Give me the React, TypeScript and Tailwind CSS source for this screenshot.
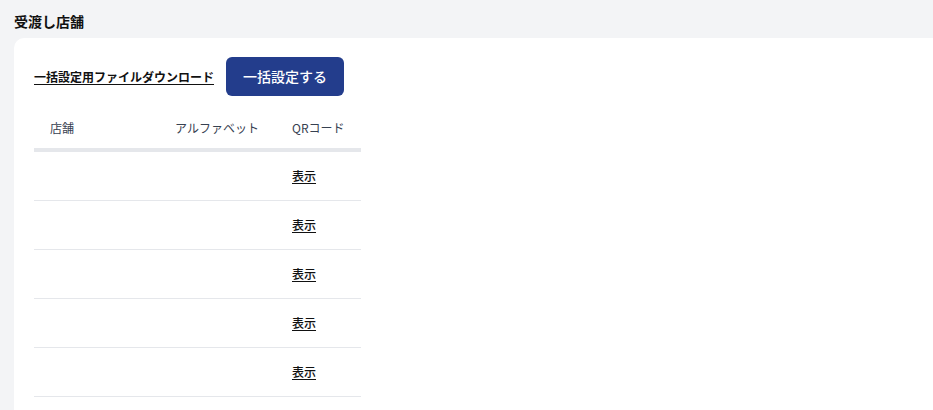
import React from "react";

const font = { fontFamily: '"Noto Sans CJK JP", "Noto Sans", sans-serif' };

export default function App() {
  const rows = [0, 1, 2, 3, 4];
  return (
    <div
      className="h-[410px] w-[933px] overflow-hidden bg-[#f3f4f6] pl-[14px] pt-[11px] flex flex-col text-black"
      style={font}
    >
      <h1 className="text-[14px] leading-5 font-bold text-[#111111]">受渡し店舗</h1>
      <div className="mt-[7px] flex-1 bg-white rounded-tl-[10px] pl-5 pt-[19px]">
        <div className="flex items-center gap-3">
          <a href="#" className="text-[12px] font-bold underline underline-offset-2 text-[#111111]">
            一括設定用ファイルダウンロード
          </a>
          <button className="w-[118px] h-[39px] rounded-md bg-[#233d8c] text-white text-[14px] font-medium">
            一括設定する
          </button>
        </div>
        <div className="mt-3 w-[327px]">
          <div className="grid grid-cols-[125px_104px_98px] h-10 items-center text-[12px] text-[#374151] border-b-4 border-[#e5e7eb] box-content">
            <div className="pl-4">店舗</div>
            <div className="pl-4 whitespace-nowrap">アルファベット</div>
            <div className="pl-[29px] whitespace-nowrap">QRコード</div>
          </div>
          {rows.map((r) => (
            <div
              key={r}
              className="grid grid-cols-[125px_104px_98px] h-12 items-center text-[12px] border-b border-[#e5e7eb] box-content"
            >
              <div />
              <div />
              <div className="pl-[29px]">
                <a href="#" className="underline underline-offset-2 font-medium text-[#111111]">
                  表示
                </a>
              </div>
            </div>
          ))}
        </div>
      </div>
    </div>
  );
}
